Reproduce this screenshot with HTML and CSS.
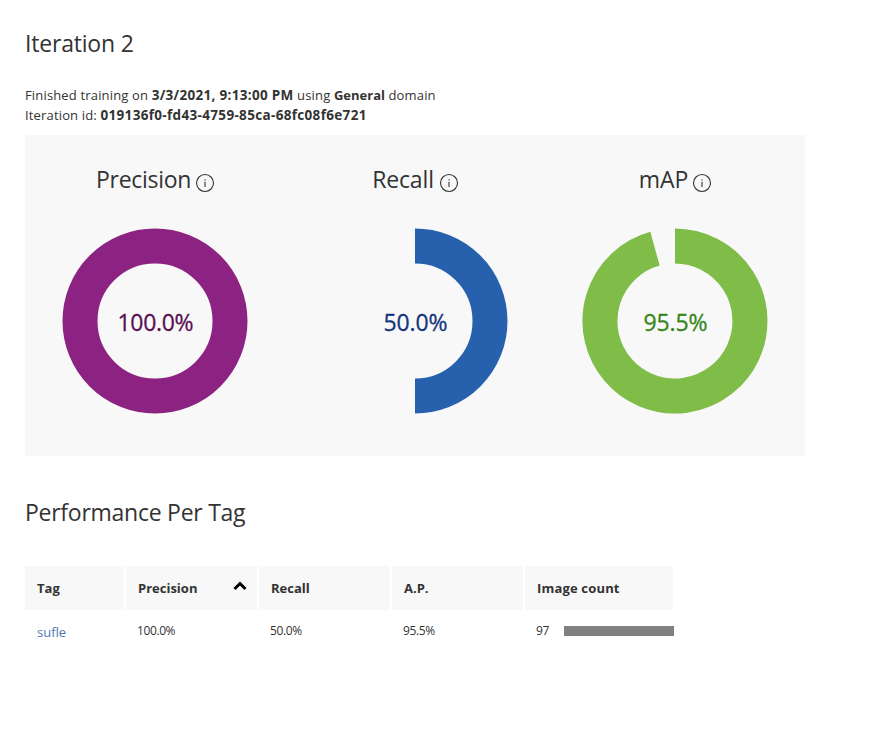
FILE: index.html
```html
<!DOCTYPE html>
<html lang="en">
<head>
<meta charset="utf-8">
<title>Iteration 2</title>
<link rel="stylesheet" href="styles.css">
</head>
<body>
<main class="page">
  <h1 class="title"><span class="t-iter">Iteration 2</span></h1>
  <div class="meta">
    <div>Finished training on <b class="date">3/3/2021, 9:13:00 PM</b> using <b class="domain">General</b> domain</div>
    <div>Iteration id: <b class="id">019136f0-fd43-4759-85ca-68fc08f6e721</b></div>
  </div>
  <section class="panel">
    <div class="metric">
      <h2 class="label"><span class="l-precision">Precision</span><svg class="info" viewBox="0 0 20 20"><circle cx="10" cy="10" r="8.5"/><path d="M10 8.7V14M10 6.2V7.4"/></svg></h2>
      <svg class="donut" viewBox="0 0 186 186">
        <circle cx="93" cy="93" r="75" fill="none" stroke="#8c2383" stroke-width="35"/>
        <text x="93.5" y="103" textLength="76" fill="#5a1055" stroke="#5a1055">100.0%</text>
      </svg>
    </div>
    <div class="metric">
      <h2 class="label"><span class="l-recall">Recall</span><svg class="info" viewBox="0 0 20 20"><circle cx="10" cy="10" r="8.5"/><path d="M10 8.7V14M10 6.2V7.4"/></svg></h2>
      <svg class="donut" viewBox="0 0 186 186">
        <path d="M93 18A75 75 0 0 1 93 168" fill="none" stroke="#2761ae" stroke-width="35"/>
        <text x="93.5" y="103" textLength="64" fill="#15357c" stroke="#15357c">50.0%</text>
      </svg>
    </div>
    <div class="metric">
      <h2 class="label"><span class="l-map">mAP</span><svg class="info" viewBox="0 0 20 20"><circle cx="10" cy="10" r="8.5"/><path d="M10 8.7V14M10 6.2V7.4"/></svg></h2>
      <svg class="donut" viewBox="0 0 186 186">
        <path d="M93 18A75 75 0 1 1 73 20.7" fill="none" stroke="#7fbc48" stroke-width="35"/>
        <text x="93.5" y="103" textLength="64" fill="#36861a" stroke="#36861a">95.5%</text>
      </svg>
    </div>
  </section>
  <h1 class="title perf"><span class="t-perf">Performance Per Tag</span></h1>
  <div class="grid head">
    <div><span>Tag</span></div>
    <div><span>Precision</span><svg class="sort" viewBox="0 0 14 10"><path d="M1.5 8L7 2.5L12.5 8"/></svg></div>
    <div><span>Recall</span></div>
    <div><span>A.P.</span></div>
    <div><span class="h-count">Image count</span></div>
  </div>
  <div class="grid row">
    <div class="tag"><a>sufle</a></div>
    <div><span>100.0%</span></div>
    <div><span>50.0%</span></div>
    <div><span>95.5%</span></div>
    <div class="count"><span>97</span><i class="bar"></i></div>
  </div>
</main>
</body>
</html>
```
FILE: styles.css
```css
* { box-sizing: border-box; }
body {
  margin: 0;
  background: #fff;
  color: #333;
  font-family: "Open Sans", "Noto Sans", sans-serif;
  font-size: 13px;
}
.page { padding: 27px 0 0 25px; }
.title { margin: 0; font-size: 23px; font-weight: 400; line-height: 32px; white-space: nowrap; }
.t-iter { letter-spacing: -0.2px; }
.t-perf { letter-spacing: -0.26px; }
.meta { height: 40px; margin-top: 26px; line-height: 20px; letter-spacing: 0.16px; white-space: nowrap; }
.meta > div { height: 20px; }
.date { font-size: 13.5px; letter-spacing: 0.3px; }
.domain { letter-spacing: 0; }
.id { font-size: 13.5px; letter-spacing: 0.33px; }
.panel {
  display: grid;
  grid-template-columns: repeat(3, 260px);
  width: 780px;
  height: 321px;
  margin-top: 10px;
  background: #f8f8f8;
}
.metric { display: flex; flex-direction: column; align-items: center; padding-top: 28px; }
.label {
  display: flex;
  align-items: center;
  gap: 5px;
  height: 32px;
  margin: 0;
  font-size: 23px;
  font-weight: 400;
  line-height: 32px;
}
.l-precision { margin: 0 -1px 0 1px; letter-spacing: -0.3px; }
.l-recall { margin-left: 1px; letter-spacing: -0.15px; }
.l-map { margin: 0 -1px 0 1px; }
.info { width: 20px; height: 20px; margin-top: 8px; fill: none; stroke: #333; stroke-width: 1.1; }
.donut { width: 186px; height: 186px; margin-top: 33px; }
.donut text { font-size: 23px; text-anchor: middle; stroke-width: 0.3; }
.perf { margin-top: 40px; }
.grid { display: grid; grid-template-columns: 99px 131px 131px 131px 148px; column-gap: 2px; }
.head { margin-top: 38px; font-weight: 700; }
.head > div {
  display: flex;
  align-items: center;
  justify-content: space-between;
  height: 44px;
  padding: 0 10px 0 12px;
  background: #f8f8f8;
  white-space: nowrap;
}
.h-count { letter-spacing: 0.17px; }
.sort { width: 14px; height: 10px; margin: -4px 0 0 0; fill: none; stroke: #000; stroke-width: 3; }
.row { font-size: 12px; line-height: 20px; padding-top: 11px; letter-spacing: -0.4px; }
.row > div { padding-left: 11px; }
.row .tag { padding: 1px 0 0 12px; font-size: 13px; color: #4f78b0; letter-spacing: 0; }
.row .count { display: flex; align-items: flex-start; justify-content: space-between; margin-right: -1px; }
.bar { width: 110px; height: 10px; margin-top: 5px; background: #808080; }
```
